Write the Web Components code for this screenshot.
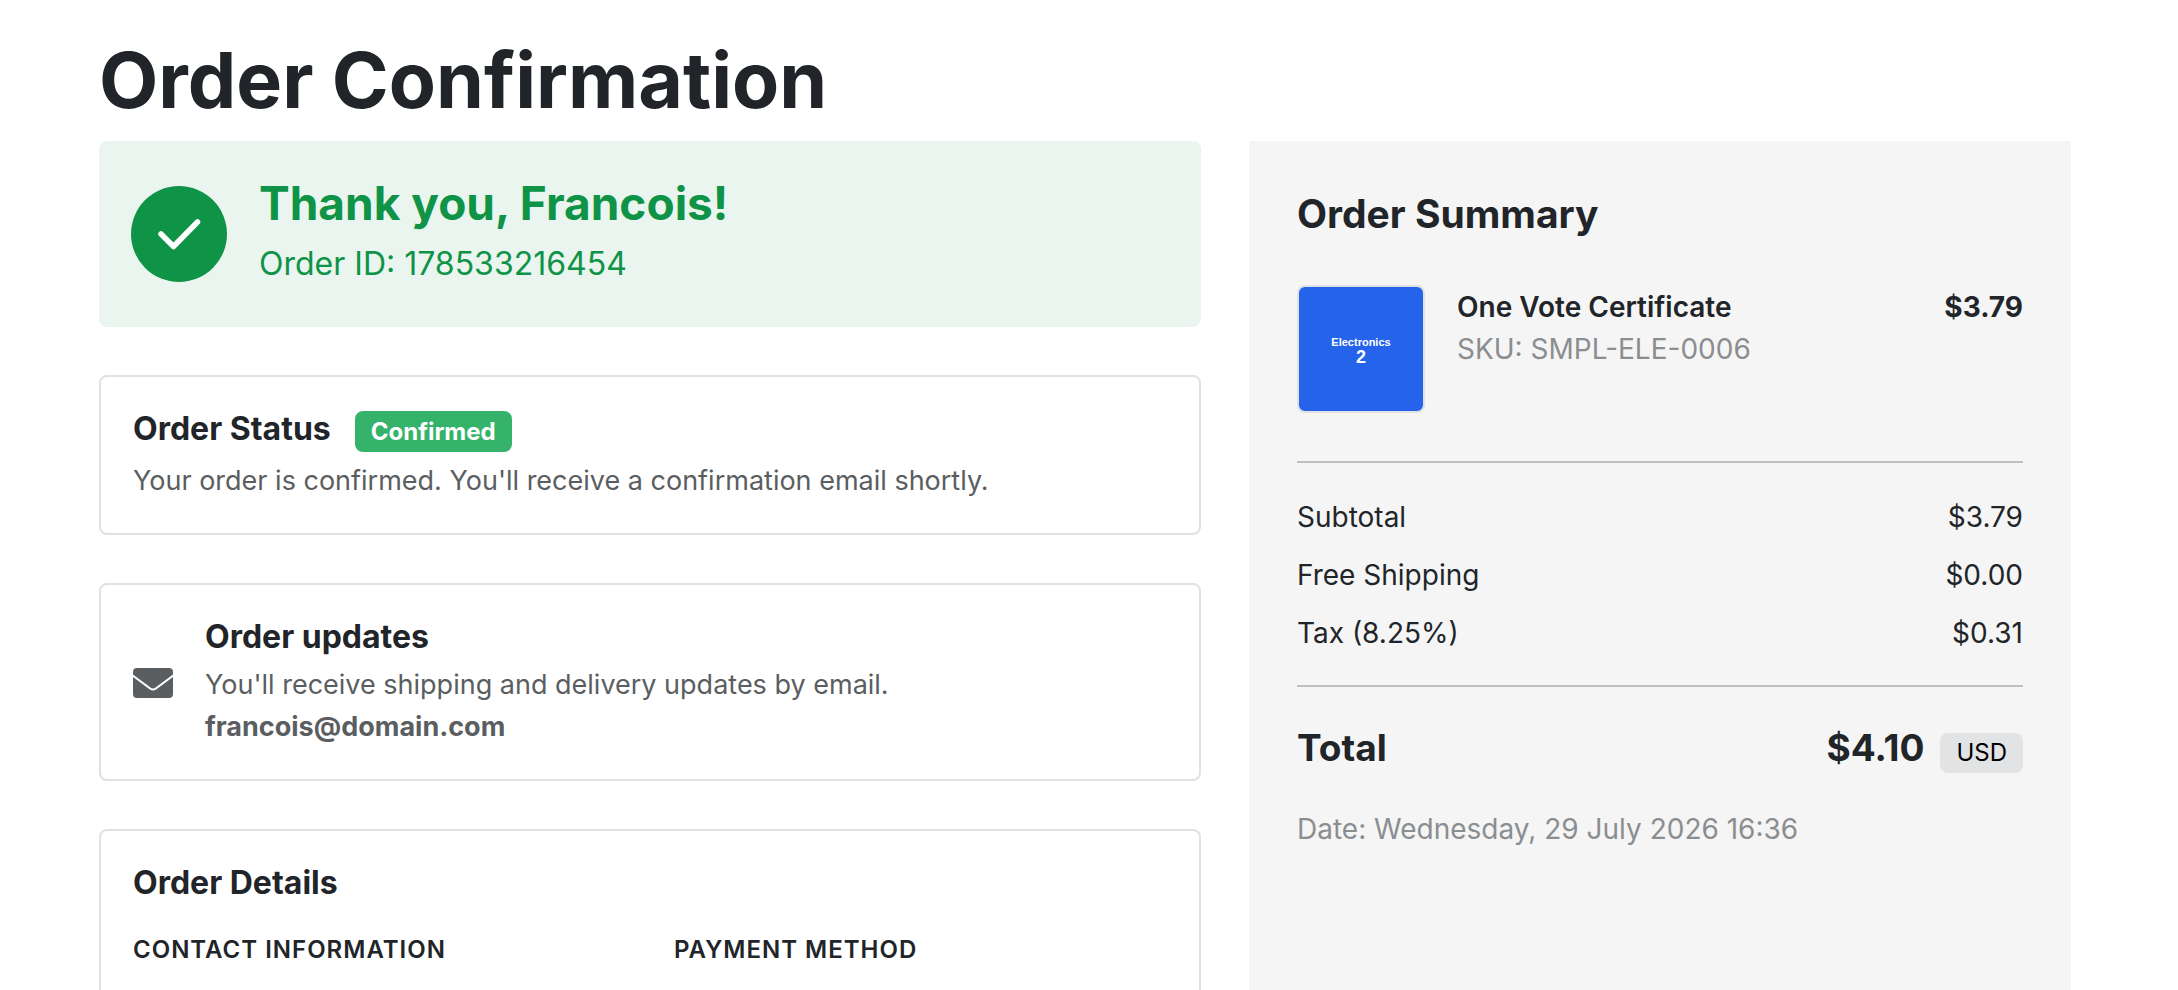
<!DOCTYPE html>
<html lang="en">
<head>
<meta charset="utf-8">
<meta name="viewport" content="width=device-width, initial-scale=1">
<title>Order Confirmation</title>
<style>
    body {
        margin: 0;
        background: #fff;
        color: #212529;
        font-family: Inter, "Liberation Sans", sans-serif;
        font-size: 28px;
        line-height: 42px;
    }
</style>
</head>
<body>
<order-page>
    <h1 slot="title">Order Confirmation</h1>

    <thank-you-banner order-id="178533216454">Thank you, Francois!</thank-you-banner>

    <order-card>
        <status-heading status="Confirmed">Order Status</status-heading>
        <p>Your order is confirmed. You'll receive a confirmation email shortly.</p>
    </order-card>

    <order-card>
        <mail-icon slot="icon"></mail-icon>
        <h2>Order updates</h2>
        <p>You'll receive shipping and delivery updates by email.</p>
        <p><strong>francois@domain.com</strong></p>
    </order-card>

    <order-card>
        <h2>Order Details</h2>
        <detail-columns>
            <h3>Contact information</h3>
            <h3>Payment method</h3>
        </detail-columns>
    </order-card>

    <order-summary slot="aside">
        <h2 slot="title">Order Summary</h2>
        <product-line slot="items" name="One Vote Certificate" sku="SMPL-ELE-0006" price="$3.79" category="Electronics" number="2"></product-line>
        <price-row label="Subtotal" amount="$3.79"></price-row>
        <price-row label="Free Shipping" amount="$0.00"></price-row>
        <price-row label="Tax (8.25%)" amount="$0.31"></price-row>
        <price-row slot="total" class="total" label="Total" amount="$4.10" currency="USD"></price-row>
        <time slot="date" datetime="2026-07-29T16:36">Date: Wednesday, 29 July 2026 16:36</time>
    </order-summary>
</order-page>

<script>
class OrderPage extends HTMLElement {
    constructor() {
        super();
        this.shadow = this.attachShadow({mode: 'open'});
    }

    connectedCallback() {
        this.shadow.innerHTML = `
            <style>
                :host {
                    display: flex;
                    flex-direction: column;
                    box-sizing: border-box;
                    min-height: 100vh;
                    padding: 32px 107px 0 99px;
                }
                ::slotted(h1) {
                    margin: 0 0 13px;
                    font-size: 77px;
                    line-height: 96px;
                    font-weight: 700;
                }
                .columns {
                    display: grid;
                    grid-template-columns: 1102fr 822fr;
                    gap: 48px;
                    flex: 1;
                }
                main {
                    display: flex;
                    flex-direction: column;
                    gap: 48px;
                }
                aside {
                    display: flex;
                }
            </style>
            <slot name="title"></slot>
            <div class="columns">
                <main><slot></slot></main>
                <aside><slot name="aside"></slot></aside>
            </div>
        `;
    }
}
customElements.define('order-page', OrderPage);


class ThankYouBanner extends HTMLElement {
    constructor() {
        super();
        this.shadow = this.attachShadow({mode: 'open'});
    }

    get orderId() {
        return this.getAttribute('order-id');
    }

    connectedCallback() {
        this.shadow.innerHTML = `
            <style>
                :host {
                    display: flex;
                    align-items: center;
                    gap: 32px;
                    padding: 32px;
                    border-radius: 8px;
                    background: #eaf5ef;
                    color: #0f9347;
                }
                svg {
                    flex: none;
                    width: 96px;
                    height: 96px;
                }
                h2 {
                    margin: 0 0 6px;
                    font-size: 46px;
                    line-height: 60px;
                    font-weight: 700;
                }
                p {
                    margin: 0 0 6px;
                    font-size: 32px;
                    line-height: 50px;
                }
            </style>
            <svg viewBox="0 0 96 96" aria-hidden="true">
                <circle cx="48" cy="48" r="48" fill="#0f9347"/>
                <path d="M30 48 42.500 60.500 66.500 36" fill="none" stroke="#fff" stroke-width="5.500" stroke-linecap="round" stroke-linejoin="round"/>
            </svg>
            <div>
                <h2><slot></slot></h2>
                <p>Order ID: ${this.orderId}</p>
            </div>
        `;
    }
}
customElements.define('thank-you-banner', ThankYouBanner);


class OrderCard extends HTMLElement {
    constructor() {
        super();
        this.shadow = this.attachShadow({mode: 'open'});
    }

    connectedCallback() {
        this.shadow.innerHTML = `
            <style>
                :host {
                    display: flex;
                    align-items: center;
                    gap: 32px;
                    padding: 33px 32px 31px;
                    border: 2px solid #dee2e6;
                    border-radius: 8px;
                    background: #fff;
                }
                .body {
                    flex: 1;
                }
                ::slotted(h2) {
                    margin: 0 0 8px;
                    font-size: 32px;
                    line-height: 38px;
                    font-weight: 700;
                }
                ::slotted(p) {
                    margin: 0;
                    color: #5a5e61;
                    font-size: 27px;
                }
            </style>
            <slot name="icon"></slot>
            <div class="body"><slot></slot></div>
        `;
    }
}
customElements.define('order-card', OrderCard);


class StatusHeading extends HTMLElement {
    constructor() {
        super();
        this.shadow = this.attachShadow({mode: 'open'});
    }

    get status() {
        return this.getAttribute('status');
    }

    connectedCallback() {
        this.shadow.innerHTML = `
            <style>
                :host {
                    display: flex;
                    align-items: baseline;
                    gap: 24px;
                    margin-bottom: 8px;
                }
                h2 {
                    margin: 0;
                    font-size: 32px;
                    line-height: 38px;
                    font-weight: 700;
                }
                .badge {
                    padding: 8px 16px;
                    border-radius: 8px;
                    background: #35b36a;
                    color: #fff;
                    font-size: 24px;
                    line-height: 25px;
                    font-weight: 700;
                }
            </style>
            <h2><slot></slot></h2>
            <span class="badge">${this.status}</span>
        `;
    }
}
customElements.define('status-heading', StatusHeading);


class MailIcon extends HTMLElement {
    constructor() {
        super();
        this.shadow = this.attachShadow({mode: 'open'});
    }

    connectedCallback() {
        this.shadow.innerHTML = `
            <style>
                :host {
                    display: block;
                    flex: none;
                    width: 40px;
                    height: 30px;
                    color: #5a5e61;
                }
                svg {
                    display: block;
                }
            </style>
            <svg width="40" height="30" viewBox="0 0 40 30" fill="currentColor" aria-hidden="true">
                <path d="M4 0H36A4 4 0 0 1 40 4V6.500L22.500 19.500Q20 21.500 17.500 19.500L0 6.500V4A4 4 0 0 1 4 0Z"/>
                <path d="M0 9 16.500 21.300Q20 23.800 23.500 21.300L40 9V26A4 4 0 0 1 36 30H4A4 4 0 0 1 0 26Z"/>
            </svg>
        `;
    }
}
customElements.define('mail-icon', MailIcon);


class DetailColumns extends HTMLElement {
    constructor() {
        super();
        this.shadow = this.attachShadow({mode: 'open'});
    }

    connectedCallback() {
        this.shadow.innerHTML = `
            <style>
                :host {
                    display: grid;
                    grid-template-columns: 1fr 1fr;
                    gap: 48px;
                    margin-top: 30px;
                    padding-bottom: 32px;
                }
                ::slotted(h3) {
                    margin: 0;
                    font-size: 24px;
                    line-height: 36px;
                    font-weight: 600;
                    letter-spacing: 1px;
                    text-transform: uppercase;
                }
            </style>
            <slot></slot>
        `;
    }
}
customElements.define('detail-columns', DetailColumns);


class OrderSummary extends HTMLElement {
    constructor() {
        super();
        this.shadow = this.attachShadow({mode: 'open'});
    }

    connectedCallback() {
        this.shadow.innerHTML = `
            <style>
                :host {
                    display: block;
                    flex: 1;
                    padding: 48px;
                    background: #f5f5f5;
                }
                ::slotted(h2) {
                    margin: 0 0 46px;
                    font-size: 39px;
                    line-height: 50px;
                    font-weight: 700;
                }
                .prices {
                    display: flex;
                    flex-direction: column;
                    gap: 16px;
                    margin: 48px 0 32px;
                    padding: 33px 0 31px;
                    border-top: 2px solid #bfbfbf;
                    border-bottom: 2px solid #bfbfbf;
                }
                ::slotted(time) {
                    display: block;
                    margin-top: 32px;
                    color: #8b8e90;
                }
            </style>
            <slot name="title"></slot>
            <slot name="items"></slot>
            <div class="prices"><slot></slot></div>
            <slot name="total"></slot>
            <slot name="date"></slot>
        `;
    }
}
customElements.define('order-summary', OrderSummary);


class ProductLine extends HTMLElement {
    constructor() {
        super();
        this.shadow = this.attachShadow({mode: 'open'});
    }

    get name() {
        return this.getAttribute('name');
    }

    get sku() {
        return this.getAttribute('sku');
    }

    get price() {
        return this.getAttribute('price');
    }

    connectedCallback() {
        this.shadow.innerHTML = `
            <style>
                :host {
                    display: flex;
                    gap: 32px;
                }
                .thumb {
                    display: flex;
                    flex-direction: column;
                    align-items: center;
                    justify-content: center;
                    box-sizing: border-box;
                    width: 128px;
                    height: 128px;
                    padding-top: 4px;
                    border: 2px solid #dee2e6;
                    border-radius: 8px;
                    background: #2563eb;
                    color: #fff;
                    font-family: "Liberation Sans", Arial, sans-serif;
                    font-weight: 700;
                }
                .category {
                    font-size: 11px;
                    line-height: 12px;
                }
                .number {
                    font-size: 18px;
                    line-height: 18px;
                }
                .info {
                    flex: 1;
                }
                .info, .price {
                    padding-top: 1px;
                }
                .name {
                    font-weight: 600;
                }
                .sku {
                    color: #8b8e90;
                }
                .price {
                    font-weight: 700;
                }
            </style>
            <div class="thumb">
                <span class="category">${this.getAttribute('category')}</span>
                <span class="number">${this.getAttribute('number')}</span>
            </div>
            <div class="info">
                <div class="name">${this.name}</div>
                <div class="sku">SKU: ${this.sku}</div>
            </div>
            <div class="price">${this.price}</div>
        `;
    }
}
customElements.define('product-line', ProductLine);


class PriceRow extends HTMLElement {
    constructor() {
        super();
        this.shadow = this.attachShadow({mode: 'open'});
    }

    get currency() {
        return this.getAttribute('currency');
    }

    connectedCallback() {
        this.shadow.innerHTML = `
            <style>
                :host {
                    display: flex;
                    align-items: baseline;
                    justify-content: space-between;
                }
                :host(.total) {
                    font-size: 37px;
                    line-height: 57px;
                    font-weight: 700;
                }
                .amount {
                    display: flex;
                    align-items: baseline;
                    gap: 16px;
                }
                .currency {
                    padding: 8px 16px;
                    border-radius: 8px;
                    background: #e1e3e5;
                    color: #000;
                    font-size: 24px;
                    line-height: 24px;
                    font-weight: 400;
                }
            </style>
            <span>${this.getAttribute('label')}</span>
            <span class="amount">
                ${this.getAttribute('amount')}
                ${this.currency ? `<span class="currency">${this.currency}</span>` : ''}
            </span>
        `;
    }
}
customElements.define('price-row', PriceRow);
</script>
</body>
</html>
